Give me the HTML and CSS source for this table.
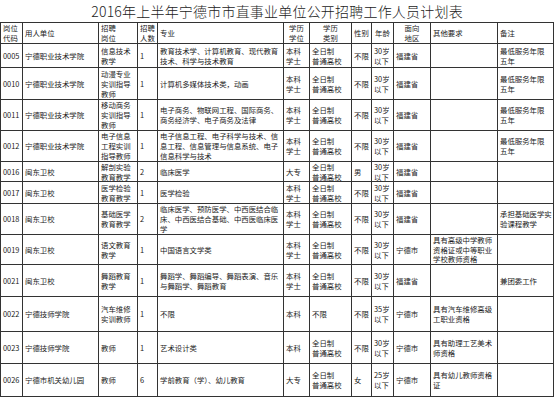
FILE: index.html
```html
<!DOCTYPE html>
<html lang="zh">
<head>
<meta charset="utf-8">
<link rel="stylesheet" href="styles.css">
</head>
<body>
<table class="plan">
<colgroup>
<col class="w22"><col class="w76"><col class="w39"><col class="w20"><col class="w126"><col class="w26"><col class="w42"><col class="w20"><col class="w22"><col class="w37"><col class="w67"><col class="w56">
</colgroup>
<tr class="r-title"><td colspan="12" class="title"><div class="c ctr"><span>2016年上半年宁德市市直事业单位公开招聘工作人员计划表</span></div></td></tr>
<tr class="r-head">
<td><div class="c"><span>岗位<br>代码</span></div></td>
<td><div class="c"><span>用人单位</span></div></td>
<td><div class="c"><span>招聘<br>岗位</span></div></td>
<td><div class="c"><span>招聘<br>人数</span></div></td>
<td><div class="c"><span>专业</span></div></td>
<td><div class="c ctr"><span>学历<br>学位</span></div></td>
<td><div class="c ctr"><span>学历<br>类别</span></div></td>
<td><div class="c ctr"><span>性别</span></div></td>
<td><div class="c ctr"><span>年龄</span></div></td>
<td><div class="c ctr"><span>面向<br>地区</span></div></td>
<td><div class="c"><span>其他要求</span></div></td>
<td><div class="c"><span>备注</span></div></td>
</tr>
<tr class="h24">
<td><div class="c"><span>0005</span></div></td><td><div class="c"><span>宁德职业技术学院</span></div></td><td><div class="c"><span>信息技术<br>教学</span></div></td><td><div class="c"><span>1</span></div></td>
<td><div class="c"><span>教育技术学、计算机教育、现代教育<br>技术、科学与技术教育</span></div></td>
<td><div class="c"><span>本科<br>学士</span></div></td><td><div class="c"><span>全日制<br>普通高校</span></div></td><td><div class="c"><span>不限</span></div></td><td><div class="c"><span>30岁<br>以下</span></div></td><td><div class="c"><span>福建省</span></div></td><td><div class="c"></div></td><td><div class="c"><span>最低服务年限<br>五年</span></div></td>
</tr>
<tr class="h32">
<td><div class="c"><span>0010</span></div></td><td><div class="c"><span>宁德职业技术学院</span></div></td><td><div class="c"><span>动漫专业<br>实训指导<br>教师</span></div></td><td><div class="c"><span>1</span></div></td>
<td><div class="c"><span>计算机多媒体技术类，动画</span></div></td>
<td><div class="c"><span>本科<br>学士</span></div></td><td><div class="c"><span>全日制<br>普通高校</span></div></td><td><div class="c"><span>不限</span></div></td><td><div class="c"><span>30岁<br>以下</span></div></td><td><div class="c"><span>福建省</span></div></td><td><div class="c"></div></td><td><div class="c"><span>最低服务年限<br>五年</span></div></td>
</tr>
<tr class="h31">
<td><div class="c"><span>0011</span></div></td><td><div class="c"><span>宁德职业技术学院</span></div></td><td><div class="c"><span>移动商务<br>实训指导<br>教师</span></div></td><td><div class="c"><span>1</span></div></td>
<td><div class="c"><span>电子商务、物联网工程、国际商务、<br>商务经济学、电子商务及法律</span></div></td>
<td><div class="c"><span>本科<br>学士</span></div></td><td><div class="c"><span>全日制<br>普通高校</span></div></td><td><div class="c"><span>不限</span></div></td><td><div class="c"><span>30岁<br>以下</span></div></td><td><div class="c"><span>福建省</span></div></td><td><div class="c"></div></td><td><div class="c"><span>最低服务年限<br>五年</span></div></td>
</tr>
<tr class="h31">
<td><div class="c"><span>0012</span></div></td><td><div class="c"><span>宁德职业技术学院</span></div></td><td><div class="c"><span>电子信息<br>工程实训<br>指导教师</span></div></td><td><div class="c"><span>1</span></div></td>
<td><div class="c"><span>电子信息工程、电子科学与技术、信<br>息工程、信息管理与信息系统、电子<br>信息科学与技术</span></div></td>
<td><div class="c"><span>本科<br>学士</span></div></td><td><div class="c"><span>全日制<br>普通高校</span></div></td><td><div class="c"><span>不限</span></div></td><td><div class="c"><span>30岁<br>以下</span></div></td><td><div class="c"><span>福建省</span></div></td><td><div class="c"></div></td><td><div class="c"><span>最低服务年限<br>五年</span></div></td>
</tr>
<tr class="h20">
<td><div class="c"><span>0016</span></div></td><td><div class="c"><span>闽东卫校</span></div></td><td><div class="c"><span>解剖实验<br>教育教学</span></div></td><td><div class="c"><span>2</span></div></td>
<td><div class="c"><span>临床医学</span></div></td>
<td><div class="c"><span>大专</span></div></td><td><div class="c"><span>全日制<br>普通高校</span></div></td><td><div class="c"><span>男</span></div></td><td><div class="c"><span>30岁<br>以下</span></div></td><td><div class="c"><span>福建省</span></div></td><td><div class="c"></div></td><td><div class="c"></div></td>
</tr>
<tr class="h22">
<td><div class="c"><span>0017</span></div></td><td><div class="c"><span>闽东卫校</span></div></td><td><div class="c"><span>医学检验<br>教育教学</span></div></td><td><div class="c"><span>1</span></div></td>
<td><div class="c"><span>医学检验</span></div></td>
<td><div class="c"><span>本科<br>学士</span></div></td><td><div class="c"><span>全日制<br>普通高校</span></div></td><td><div class="c"><span>不限</span></div></td><td><div class="c"><span>30岁<br>以下</span></div></td><td><div class="c"><span>福建省</span></div></td><td><div class="c"></div></td><td><div class="c"></div></td>
</tr>
<tr class="h31">
<td><div class="c"><span>0018</span></div></td><td><div class="c"><span>闽东卫校</span></div></td><td><div class="c"><span>基础医学<br>教育教学</span></div></td><td><div class="c"><span>2</span></div></td>
<td><div class="c"><span>临床医学、预防医学、中西医结合临<br>床、中西医结合基础、中西医临床医<br>学</span></div></td>
<td><div class="c"><span>本科<br>学士</span></div></td><td><div class="c"><span>全日制<br>普通高校</span></div></td><td><div class="c"><span>不限</span></div></td><td><div class="c"><span>30岁<br>以下</span></div></td><td><div class="c"><span>福建省</span></div></td><td><div class="c"></div></td><td><div class="c"><span>承担基础医学实<br>验课程教学</span></div></td>
</tr>
<tr class="h30">
<td><div class="c"><span>0019</span></div></td><td><div class="c"><span>闽东卫校</span></div></td><td><div class="c"><span>语文教育<br>教学</span></div></td><td><div class="c"><span>1</span></div></td>
<td><div class="c"><span>中国语言文学类</span></div></td>
<td><div class="c"><span>本科<br>学士</span></div></td><td><div class="c"><span>全日制<br>普通高校</span></div></td><td><div class="c"><span>不限</span></div></td><td><div class="c"><span>30岁<br>以下</span></div></td><td><div class="c"><span>宁德市</span></div></td><td><div class="c"><span>具有高级中学教师<br>资格证或中等职业<br>学校教师资格</span></div></td><td><div class="c"></div></td>
</tr>
<tr class="h32">
<td><div class="c"><span>0021</span></div></td><td><div class="c"><span>闽东卫校</span></div></td><td><div class="c"><span>舞蹈教育<br>教学</span></div></td><td><div class="c"><span>1</span></div></td>
<td><div class="c"><span>舞蹈学、舞蹈编导、舞蹈表演、音乐<br>与舞蹈学、舞蹈教育</span></div></td>
<td><div class="c"><span>本科<br>学士</span></div></td><td><div class="c"><span>全日制<br>普通高校</span></div></td><td><div class="c"><span>不限</span></div></td><td><div class="c"><span>30岁<br>以下</span></div></td><td><div class="c"><span>福建省</span></div></td><td><div class="c"></div></td><td><div class="c"><span>兼团委工作</span></div></td>
</tr>
<tr class="h35">
<td><div class="c"><span>0022</span></div></td><td><div class="c"><span>宁德技师学院</span></div></td><td><div class="c"><span>汽车维修<br>实训教师</span></div></td><td><div class="c"><span>1</span></div></td>
<td><div class="c"><span>不限</span></div></td>
<td><div class="c"><span>本科</span></div></td><td><div class="c"><span>不限</span></div></td><td><div class="c"><span>不限</span></div></td><td><div class="c"><span>35岁<br>以下</span></div></td><td><div class="c"><span>宁德市</span></div></td><td><div class="c"><span>具有汽车维修高级<br>工职业资格</span></div></td><td><div class="c"></div></td>
</tr>
<tr class="h32">
<td><div class="c"><span>0023</span></div></td><td><div class="c"><span>宁德技师学院</span></div></td><td><div class="c"><span>教师</span></div></td><td><div class="c"><span>1</span></div></td>
<td><div class="c"><span>艺术设计类</span></div></td>
<td><div class="c"><span>本科</span></div></td><td><div class="c"><span>全日制<br>普通高校</span></div></td><td><div class="c"><span>不限</span></div></td><td><div class="c"><span>30岁<br>以下</span></div></td><td><div class="c"><span>宁德市</span></div></td><td><div class="c"><span>具有助理工艺美术<br>师资格</span></div></td><td><div class="c"></div></td>
</tr>
<tr class="h33">
<td><div class="c"><span>0026</span></div></td><td><div class="c"><span>宁德市机关幼儿园</span></div></td><td><div class="c"><span>教师</span></div></td><td><div class="c"><span>6</span></div></td>
<td><div class="c"><span>学前教育（学）、幼儿教育</span></div></td>
<td><div class="c"><span>大专</span></div></td><td><div class="c"><span>全日制<br>普通高校</span></div></td><td><div class="c"><span>女</span></div></td><td><div class="c"><span>25岁<br>以下</span></div></td><td><div class="c"><span>宁德市</span></div></td><td><div class="c"><span>具有幼儿教师资格<br>证</span></div></td><td><div class="c"></div></td>
</tr>
</table>
</body>
</html>
```
FILE: styles.css
```css
html, body {
  margin: 0;
  padding: 0;
  background: #ffffff;
}
body {
  font-family: "Noto Sans CJK SC", "Liberation Sans", sans-serif;
  color: #1a1a1a;
}
.plan {
  border-collapse: collapse;
  table-layout: fixed;
  width: 553px;
}
.w22 { width: 22px; }
.w76 { width: 76px; }
.w39 { width: 39px; }
.w20 { width: 20px; }
.w126 { width: 126px; }
.w26 { width: 26px; }
.w42 { width: 42px; }
.w37 { width: 37px; }
.w56 { width: 56px; }
.w67 { width: 67px; }
.plan td {
  border: 1px solid #333333;
  padding: 0;
  vertical-align: middle;
}
.plan td.title {
  border: none;
  border-bottom: 1px solid #333333;
}
.c {
  display: flex;
  align-items: center;
  overflow: hidden;
  padding-left: 2px;
  font-size: 7.4px;
  line-height: 10px;
  white-space: nowrap;
  box-sizing: border-box;
}
.c span {
  display: block;
}
.c.ctr {
  justify-content: center;
  text-align: center;
  padding-left: 0;
}
.title .c {
  height: 22px;
  font-size: 14px;
  line-height: 20px;
  font-weight: 300;
  color: #222;
  letter-spacing: 0.2px;
}
.r-head .c { height: 20px; line-height: 9.8px; }
.h20 .c { height: 19px; line-height: 9.5px; }
.h22 .c { height: 21px; }
.h24 .c { height: 23px; }
.h30 .c { height: 29px; line-height: 9.6px; }
.h31 .c { height: 30px; }
.h32 .c { height: 31px; }
.h33 .c { height: 32px; }
.h35 .c { height: 34px; }
```
